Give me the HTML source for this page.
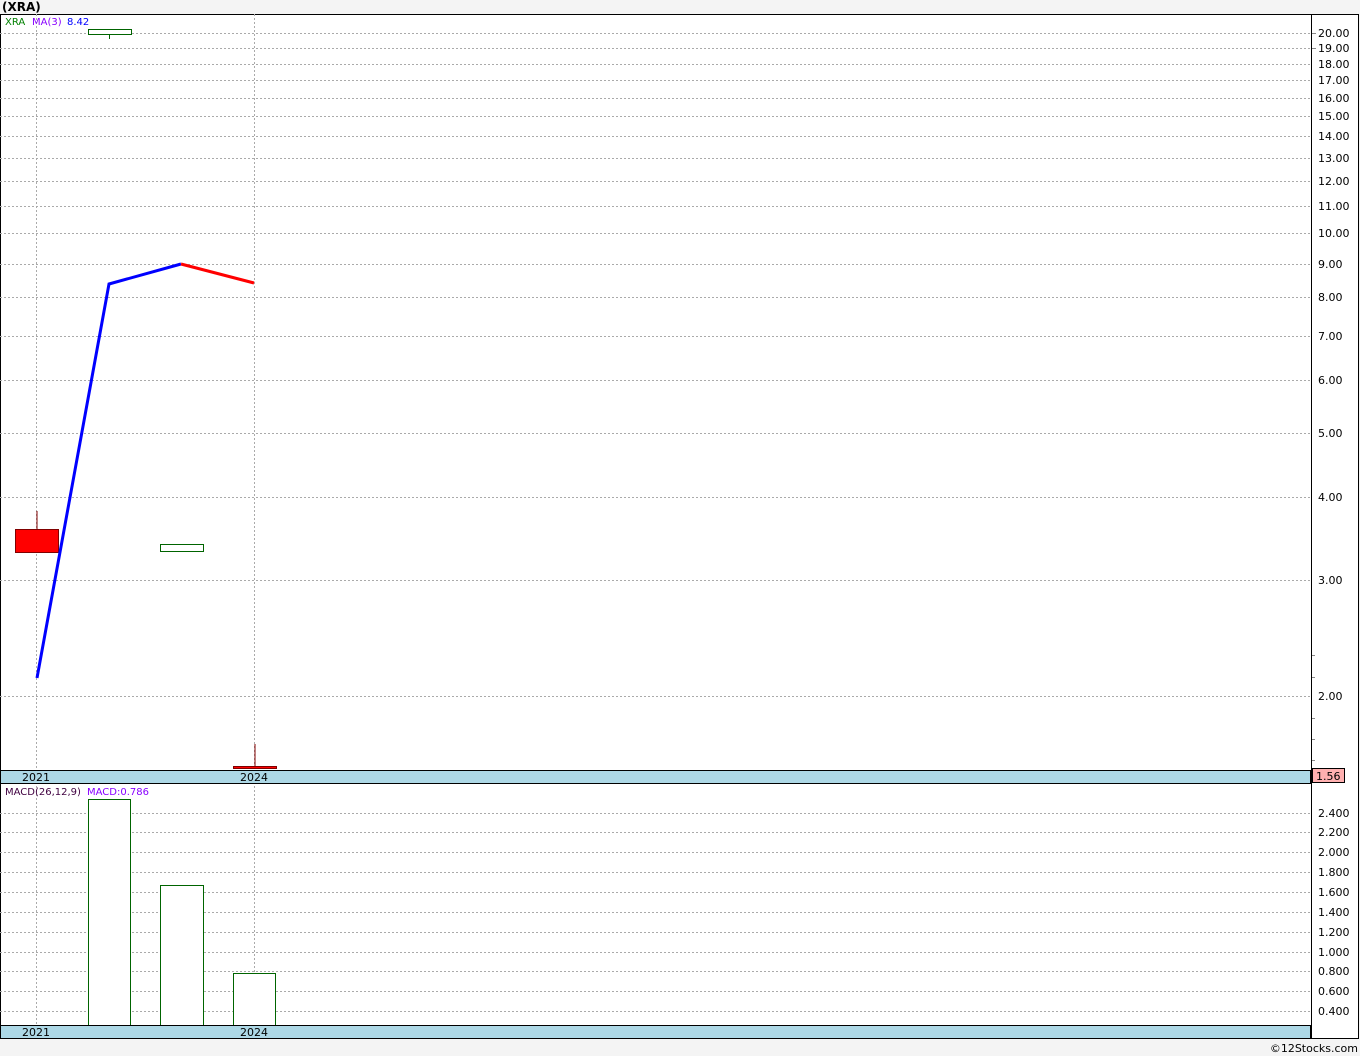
<!DOCTYPE html>
<html><head><meta charset="utf-8"><style>
body{margin:0;background:#f4f4f4;width:1360px;height:1056px;overflow:hidden;font-family:"DejaVu Sans","Liberation Sans",sans-serif}
svg{position:absolute;left:0;top:0}
</style></head><body>
<svg width="1360" height="1056" xmlns="http://www.w3.org/2000/svg" font-family="DejaVu Sans, Liberation Sans, sans-serif" font-size="11">
<text x="2" y="11" font-weight="bold" font-size="12" fill="#000">(XRA)</text>
<rect x="0.5" y="14.5" width="1358" height="1024" fill="#fff" stroke="#000" stroke-width="1"/>
<g stroke="#aaa" stroke-dasharray="2,2" stroke-width="1">
<line x1="0" x2="1311" y1="33.5" y2="33.5"/><line x1="0" x2="1311" y1="48.5" y2="48.5"/><line x1="0" x2="1311" y1="64.5" y2="64.5"/><line x1="0" x2="1311" y1="80.5" y2="80.5"/><line x1="0" x2="1311" y1="98.5" y2="98.5"/><line x1="0" x2="1311" y1="116.5" y2="116.5"/><line x1="0" x2="1311" y1="136.5" y2="136.5"/><line x1="0" x2="1311" y1="158.5" y2="158.5"/><line x1="0" x2="1311" y1="181.5" y2="181.5"/><line x1="0" x2="1311" y1="206.5" y2="206.5"/><line x1="0" x2="1311" y1="233.5" y2="233.5"/><line x1="0" x2="1311" y1="264.5" y2="264.5"/><line x1="0" x2="1311" y1="297.5" y2="297.5"/><line x1="0" x2="1311" y1="336.5" y2="336.5"/><line x1="0" x2="1311" y1="380.5" y2="380.5"/><line x1="0" x2="1311" y1="433.5" y2="433.5"/><line x1="0" x2="1311" y1="497.5" y2="497.5"/><line x1="0" x2="1311" y1="580.5" y2="580.5"/><line x1="0" x2="1311" y1="696.5" y2="696.5"/>
<line x1="0" x2="1311" y1="813.5" y2="813.5"/><line x1="0" x2="1311" y1="832.5" y2="832.5"/><line x1="0" x2="1311" y1="852.5" y2="852.5"/><line x1="0" x2="1311" y1="872.5" y2="872.5"/><line x1="0" x2="1311" y1="892.5" y2="892.5"/><line x1="0" x2="1311" y1="912.5" y2="912.5"/><line x1="0" x2="1311" y1="932.5" y2="932.5"/><line x1="0" x2="1311" y1="952.5" y2="952.5"/><line x1="0" x2="1311" y1="971.5" y2="971.5"/><line x1="0" x2="1311" y1="991.5" y2="991.5"/><line x1="0" x2="1311" y1="1011.5" y2="1011.5"/>
<line x1="36.5" x2="36.5" y1="14" y2="1039"/><line x1="254.5" x2="254.5" y1="14" y2="1039"/>
</g>
<g fill="#000" font-size="11">
<text x="1318" y="37">20.00</text><text x="1318" y="52">19.00</text><text x="1318" y="68">18.00</text><text x="1318" y="84">17.00</text><text x="1318" y="102">16.00</text><text x="1318" y="120">15.00</text><text x="1318" y="140">14.00</text><text x="1318" y="162">13.00</text><text x="1318" y="185">12.00</text><text x="1318" y="210">11.00</text><text x="1318" y="237">10.00</text><text x="1318" y="268">9.00</text><text x="1318" y="301">8.00</text><text x="1318" y="340">7.00</text><text x="1318" y="384">6.00</text><text x="1318" y="437">5.00</text><text x="1318" y="501">4.00</text><text x="1318" y="584">3.00</text><text x="1318" y="700">2.00</text>
<text x="1318" y="817">2.400</text><text x="1318" y="836">2.200</text><text x="1318" y="856">2.000</text><text x="1318" y="876">1.800</text><text x="1318" y="896">1.600</text><text x="1318" y="916">1.400</text><text x="1318" y="936">1.200</text><text x="1318" y="956">1.000</text><text x="1318" y="975">0.800</text><text x="1318" y="995">0.600</text><text x="1318" y="1015">0.400</text>
</g>
<g stroke="#888"><line x1="1311" x2="1316" y1="33.5" y2="33.5"/><line x1="1311" x2="1316" y1="48.5" y2="48.5"/><line x1="1311" x2="1315" y1="718.5" y2="718.5"/><line x1="1311" x2="1315" y1="739.5" y2="739.5"/><line x1="1311" x2="1315" y1="760.5" y2="760.5"/><line x1="1311" x2="1315" y1="677.5" y2="677.5"/><line x1="1311" x2="1315" y1="655.5" y2="655.5"/></g>
<line x1="37" x2="37" y1="511" y2="553" stroke="#800000"/>
<rect x="15.5" y="529.5" width="43" height="23" fill="#f00" stroke="#800000"/>
<line x1="109.5" x2="109.5" y1="34" y2="39" stroke="#006400"/>
<rect x="88.5" y="29.5" width="43" height="5" fill="#fff" stroke="#006400"/>
<rect x="160.5" y="544.5" width="43" height="7" fill="#fff" stroke="#006400"/>
<line x1="255" x2="255" y1="744" y2="767" stroke="#800000"/>
<rect x="233.5" y="766.5" width="43" height="2" fill="#f00" stroke="#800000"/>
<polyline points="37,678 109,284 181,264" fill="none" stroke="#00f" stroke-width="3"/>
<polyline points="181,264 254,283" fill="none" stroke="#f00" stroke-width="3"/>
<text x="5" y="25" fill="#008000" font-size="10">XRA</text>
<text x="32" y="25" fill="#80f" font-size="10">MA(3)</text>
<text x="67" y="25" fill="#00f" font-size="10">8.42</text>
<rect x="0.5" y="770.5" width="1310" height="13" fill="#add8e6" stroke="#000"/>
<text x="22" y="781" fill="#000">2021</text><text x="240" y="781" fill="#000">2024</text>
<rect x="1312.5" y="768.5" width="32" height="14" fill="#ffb0b0" stroke="#000"/>
<text x="1316" y="780" fill="#000">1.56</text>
<line x1="1311.5" x2="1311.5" y1="14" y2="1039" stroke="#000"/>
<text x="5" y="795" fill="#400040" font-size="10">MACD(26,12,9)</text>
<text x="87" y="795" fill="#80f" font-size="10">MACD:0.786</text>
<rect x="88.5" y="799.5" width="42" height="226" fill="#fff" stroke="#006400"/>
<rect x="160.5" y="885.5" width="43" height="140" fill="#fff" stroke="#006400"/>
<rect x="233.5" y="973.5" width="42" height="52" fill="#fff" stroke="#006400"/>
<rect x="0.5" y="1025.5" width="1310" height="13" fill="#add8e6" stroke="#000"/>
<text x="22" y="1036" fill="#000">2021</text><text x="240" y="1036" fill="#000">2024</text>
<text x="1358" y="1052" fill="#000" font-size="11" text-anchor="end">©12Stocks.com</text>
</svg>
</body></html>
